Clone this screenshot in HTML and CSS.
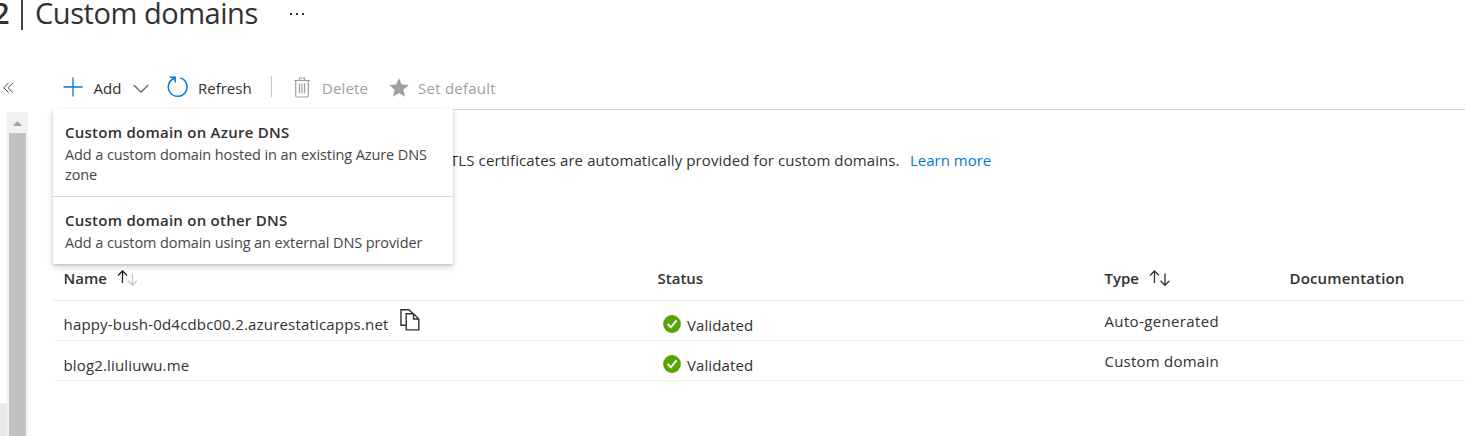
FILE: index.html
```html
<!DOCTYPE html>
<html lang="en">
<head>
<meta charset="utf-8">
<title>Custom domains</title>
<link rel="stylesheet" href="styles.css">
</head>
<body>
<div class="page">
  <header class="title-bar">
    <span class="app-name">2</span>
    <span class="title-divider"></span>
    <h1 class="title">Custom domains</h1>
    <svg class="more" width="16" height="4" viewBox="0 0 16 4" fill="#323130"><rect x="0" y="1" width="2" height="2"/><rect x="6" y="1" width="2" height="2"/><rect x="12" y="1" width="2" height="2"/></svg>
  </header>
  <div class="body">
    <aside class="sidebar">
      <svg class="collapse" width="11" height="12" viewBox="0 0 11 12" fill="none" stroke="#484644" stroke-width="1"><path d="M5.5 1 .8 5.8l4.7 4.8M9.8 1 5.1 5.8l4.7 4.8"/></svg>
      <div class="sidebar-body">
        <div class="selected-item"></div>
        <div class="scrollbar">
          <svg width="21" height="21" viewBox="0 0 21 21" fill="#a3a3a3"><path d="M6 14 10.5 9l4.5 5z"/></svg>
          <div class="thumb"></div>
        </div>
      </div>
    </aside>
    <main class="main">
      <nav class="toolbar">
        <button class="command add">
          <svg width="20" height="20" viewBox="0 0 20 20" fill="none" stroke="#0078d4" stroke-width="1.3"><path d="M10 .5v19M.5 10h19"/></svg>
          <span class="add-label">Add</span>
          <svg class="chevron" width="16" height="10" viewBox="0 0 16 10" fill="none" stroke="#605e5c" stroke-width="1.2"><path d="m.8 1 7.2 7.2L15.2 1"/></svg>
        </button>
        <button class="command refresh">
          <svg width="22" height="22" viewBox="0 0 22 22" fill="none" stroke="#0078d4" stroke-width="1.5"><path d="M13.3 1.9A9.4 9.4 0 1 1 7.2 2.2M2.8 1.2h5.4v5.2M8 1.5 5.5 4"/></svg>
          <span class="refresh-label">Refresh</span>
        </button>
        <span class="separator"></span>
        <button class="command delete" disabled>
          <svg width="16" height="21" viewBox="0 0 16 21" fill="none" stroke="#a19f9d" stroke-width="1.2"><path d="M0 3.5h16M5.5 3.5V1h5v2.5M1.7 3.5v15.2q0 1.3 1.3 1.3h10q1.3 0 1.3-1.3V3.5M5.5 6.5v10M8 6.5v10M10.5 6.5v10"/></svg>
          <span class="delete-label">Delete</span>
        </button>
        <button class="command default" disabled>
          <svg width="20" height="19" viewBox="0 0 20 19" fill="#a19f9d"><path d="m10 0 2.7 6.6 7.1.5-5.5 4.6 1.8 7-6.1-3.8-6.1 3.8 1.8-7L.2 7.1l7.1-.5z"/></svg>
          <span class="default-label">Set default</span>
        </button>
        <div class="menu">
          <div class="menu-item">
            <div class="menu-title">Custom domain on Azure DNS</div>
            <div class="menu-text">Add a custom domain hosted in an existing Azure DNS<br>zone</div>
          </div>
          <div class="menu-item">
            <div class="menu-title">Custom domain on other DNS</div>
            <div class="menu-text">Add a custom domain using an external DNS provider</div>
          </div>
        </div>
      </nav>
      <p class="intro"><span class="intro-text">TLS certificates are automatically provided for custom domains.</span><a class="learn">Learn more</a></p>
      <section class="table">
        <div class="row head">
          <div class="cell"><span>Name</span>
            <svg class="sort" width="20" height="16" viewBox="0 0 20 16" fill="none" stroke-width="1.3"><path stroke="#201f1e" d="M5.5 13V1M1 5.5 5.5 1 10 5.5"/><path stroke="#c8c6c4" d="M15.5 3.5v11.7M11 10.8l4.5 4.5 4.5-4.5"/></svg>
          </div>
          <div class="cell"><span>Status</span></div>
          <div class="cell"><span>Type</span>
            <svg class="sort" width="21" height="16" viewBox="0 0 21 16" fill="none" stroke="#323130" stroke-width="1.3"><path d="M5.5 13V1M1 5.5 5.5 1 10 5.5M16 3.5v11.7M11.5 10.8l4.5 4.5 4.5-4.5"/></svg>
          </div>
          <div class="cell"><span class="doc-head">Documentation</span></div>
        </div>
        <div class="row">
          <div class="cell name host-cell"><span class="host">happy-bush-0d4cdbc00.2.azurestaticapps.net</span>
            <svg class="copy" width="20" height="22" viewBox="0 0 20 22" fill="#fff" stroke="#323130" stroke-width="1.4"><path d="M6 16.3H1V.8h8l4 4"/><path d="M6.2 4.8h7.3l5.3 5.2v10.9H6.2zM13.5 4.8V10h5.3"/></svg>
          </div>
          <div class="cell status"><svg width="18" height="18" viewBox="0 0 18 18"><circle cx="9" cy="9" r="8.9" fill="#57a300"/><path d="m4.7 8.8 3.2 3.5 5.7-7" fill="none" stroke="#fff" stroke-width="2"/></svg><span class="valid">Validated</span></div>
          <div class="cell type"><span class="auto">Auto-generated</span></div>
          <div class="cell"></div>
        </div>
        <div class="row">
          <div class="cell name"><span class="blog">blog2.liuliuwu.me</span></div>
          <div class="cell status"><svg width="18" height="18" viewBox="0 0 18 18"><circle cx="9" cy="9" r="8.9" fill="#57a300"/><path d="m4.7 8.8 3.2 3.5 5.7-7" fill="none" stroke="#fff" stroke-width="2"/></svg><span class="valid">Validated</span></div>
          <div class="cell type"><span class="custom">Custom domain</span></div>
          <div class="cell"></div>
        </div>
      </section>
    </main>
  </div>
</div>
</body>
</html>
```

FILE: styles.css
```css
* { box-sizing: border-box; }
body { margin: 0; background: #fff; color: #323130; font: 15px/20px "Open Sans", "Noto Sans", sans-serif; }
.page { height: 436px; overflow: hidden; display: flex; flex-direction: column; white-space: nowrap; }
.title-bar { display: flex; height: 66px; flex: none; }
.app-name { margin-left: -7px; width: 17px; font-size: 29px; line-height: 26px; font-weight: 600; }
.title-divider { width: 2px; height: 30px; margin: 0 12px 0 11px; background: #484644; }
.title { margin: 0; width: 255px; font-size: 29px; line-height: 26px; font-weight: 400; letter-spacing: -0.45px; }
.more { margin-top: 12px; }
.body { flex: 1; display: flex; }
.sidebar { width: 53px; flex: none; display: flex; flex-direction: column; }
.collapse { margin: 16px 0 18px 3px; }
.sidebar-body { flex: 1; display: flex; }
.selected-item { width: 7px; height: 33px; align-self: flex-end; background: #edebe9; }
.scrollbar { width: 21px; display: flex; flex-direction: column; background: #f1f1f1; }
.thumb { flex: 1; margin: 0 2px; background: #c1c1c1; }
.main { flex: 1; min-width: 0; }
.toolbar { position: relative; height: 44px; border-bottom: 1px solid #d2d0ce; display: flex; align-items: center; padding: 0 0 1px 10px; }
.command { display: flex; align-items: center; padding: 0; border: 0; background: none; color: inherit; font: inherit; }
.command span { padding-top: 2px; }
.add { width: 104px; }
.add-label { width: 29px; margin: 0 11px 0 10px; }
.chevron { margin-top: 3px; }
.refresh { width: 103px; }
.refresh-label { margin-left: 9px; }
.separator { width: 1px; height: 21px; margin: 0 22px 2px 1px; background: #c8c6c4; }
.command:disabled { color: #a19f9d; }
.delete { width: 95px; }
.delete-label { margin-left: 12px; letter-spacing: 0.15px; }
.default-label { margin-left: 9px; letter-spacing: 0.25px; }
.menu { position: absolute; z-index: 1; left: 0; top: 43px; width: 400px; height: 155px; background: #fff; box-shadow: 0 3px 7px rgba(0,0,0,.16), 0 1px 2px rgba(0,0,0,.16); }
.menu-item { padding: 13px 12px 0; }
.menu-item:first-child { height: 88px; border-bottom: 1px solid #dad8d6; }
.menu-title { height: 23px; font-weight: 600; letter-spacing: 0.25px; }
.menu-text { font-size: 14.5px; color: #484644; letter-spacing: -0.1px; }
.intro { margin: 40px 0 0 397px; display: flex; }
.intro-text { width: 460px; letter-spacing: 0.1px; }
.learn { color: #0078d4; }
.table { margin-top: 87px; }
.row { display: grid; grid-template-columns: 594px 447px 185px 1fr; height: 40px; padding-left: 10.5px; border-bottom: 1px solid #f3f2f1; }
.head { height: 44px; border-color: #edebe9; font-weight: 600; }
.head .cell { padding-bottom: 2px; }
.cell { display: flex; align-items: center; }
.sort { margin-left: 10px; }
.name { padding-top: 8px; }
.host-cell { padding-top: 6px; }
.host { letter-spacing: 0.18px; }
.blog { letter-spacing: 0.15px; }
.auto { letter-spacing: 0.36px; }
.custom { letter-spacing: 0.23px; }
.valid { letter-spacing: 0.1px; }
.doc-head { letter-spacing: 0.15px; }
.copy { margin: -8px 0 0 11px; }
.status { padding: 9px 0 0 5.5px; gap: 6px; }
.status svg { margin-top: -2px; }
```
